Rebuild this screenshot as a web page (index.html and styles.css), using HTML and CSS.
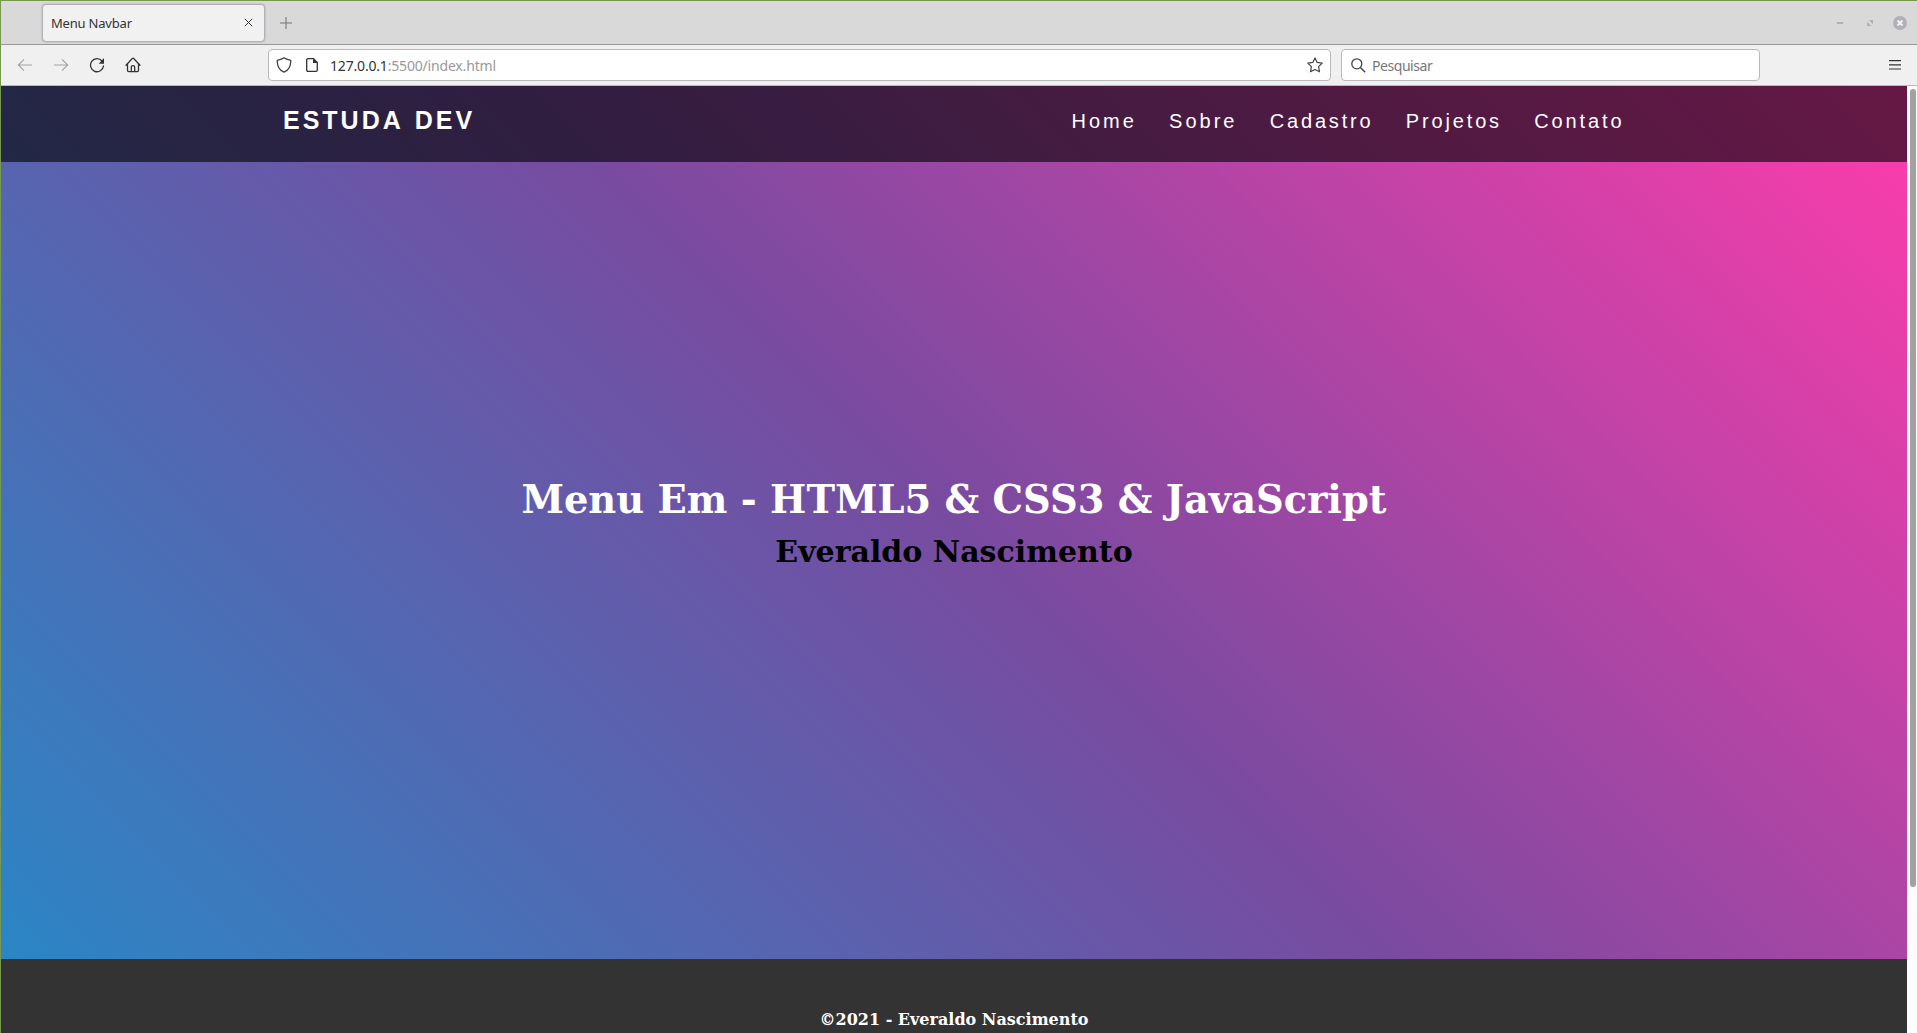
FILE: index.html
```html
<!DOCTYPE html>
<html lang="pt-BR">
<head>
<meta charset="UTF-8">
<title>Menu Navbar</title>
<link rel="stylesheet" href="styles.css">
</head>
<body>
<div class="window">
  <div class="tabbar">
    <div class="tab">
      <span class="tab-title">Menu Navbar</span>
      <svg class="tab-close" width="9" height="9" viewBox="0 0 9 9"><path d="M.8.8l7.400 7.400M8.200.8L.8 8.200" stroke="#333" stroke-width="1" fill="none"/></svg>
    </div>
    <svg class="newtab" width="12" height="12" viewBox="0 0 12 12"><path d="M6 0v12M0 6h12" stroke="#777" stroke-width="1.1"/></svg>
    <div class="controls">
      <svg width="6" height="14" viewBox="0 0 6 14"><path d="M0 7h6" stroke="#b0b1b8" stroke-width="2"/></svg>
      <svg width="6" height="14" viewBox="0 0 6 14"><path d="M1.8 4H6v4.2zM0 5.8V10h4.2z" fill="#b0b1b8"/></svg>
      <svg width="14" height="14" viewBox="0 0 14 14"><circle cx="7" cy="7" r="7" fill="#b0b1b8"/><path d="M4.5 4.5l5 5M9.5 4.5l-5 5" stroke="#f2f2f2" stroke-width="2"/></svg>
    </div>
  </div>
  <div class="toolbar">
    <div class="buttons">
      <svg width="16" height="16" viewBox="0 0 16 16"><path d="M15 8H1.5M7 2.3L1.3 8 7 13.7" stroke="#a3a3a3" stroke-width="1.1" fill="none"/></svg>
      <svg width="16" height="16" viewBox="0 0 16 16"><path d="M1 8h13.5M9 2.3L14.7 8 9 13.7" stroke="#a3a3a3" stroke-width="1.1" fill="none"/></svg>
      <svg width="16" height="16" viewBox="0 0 16 16"><path d="M13 4A6.5 6.5 0 1 0 14.5 9" stroke="#333" stroke-width="1.3" fill="none" stroke-linecap="round"/><path d="M15 1v5.2a.5.5 0 0 1-.5.5H9.8z" fill="#333"/></svg>
      <svg class="home" width="16" height="16" viewBox="0 0 16 16"><path d="M1 8.2L7.3 1.5q.7-.6 1.4 0L15 8.2M2.5 7v6.3q0 1.3 1.3 1.3h8.4q1.3 0 1.3-1.3V7M6.3 14.5v-4.2q0-1.7 1.7-1.7t1.7 1.7v4.2" stroke="#333" stroke-width="1.3" fill="none" stroke-linecap="round"/></svg>
    </div>
    <div class="field address">
      <svg width="16" height="16" viewBox="0 0 16 16"><path d="M8 .8C6.200 2.300 4 2.800 1.300 3.300 1 8.700 3 13 8 15.200 13 13 15 8.700 14.700 3.300 12 2.800 9.800 2.300 8 .8z" stroke="#444" stroke-width="1.3" fill="none" stroke-linejoin="round"/></svg>
      <svg class="page-icon" width="12" height="14" viewBox="0 0 12 14"><path d="M2 .7h5.500L11.300 4.500V12q0 1.300-1.300 1.300H2Q.7 13.300.7 12V2Q.7.7 2 .7z" stroke="#333" stroke-width="1.3" fill="none"/><path d="M7 .5V5h4.500z" fill="#333"/></svg>
      <span class="url"><span class="host">127.0.0.1</span><span class="path">:5500/index.html</span></span>
      <svg class="star" width="16" height="16" viewBox="0 0 16 16"><path d="M8 .9l2.200 4.500 5 .7-3.600 3.500.9 5.200L8 12.500l-4.500 2.300.9-5.200L.8 6.100l5-.7z" stroke="#444" stroke-width="1.2" fill="none" stroke-linejoin="round"/></svg>
    </div>
    <div class="field search">
      <svg width="15" height="15" viewBox="0 0 15 15"><circle cx="5.800" cy="5.800" r="5" stroke="#444" stroke-width="1.300" fill="none"/><path d="M9.400 9.400l4.800 4.800" stroke="#444" stroke-width="1.400"/></svg>
      <span class="placeholder">Pesquisar</span>
    </div>
    <svg class="menu" width="12" height="10" viewBox="0 0 12 10"><path d="M0 .6h12M0 4.800h12M0 9h12" stroke="#333" stroke-width="1.200"/></svg>
  </div>
  <div class="viewport">
    <div class="page">
      <div class="banner">
        <header class="navbar">
          <a class="logo">ESTUDA DEV</a>
          <nav class="links"><a>Home</a><a>Sobre</a><a>Cadastro</a><a>Projetos</a><a>Contato</a></nav>
        </header>
        <main class="hero">
          <h1>Menu Em - HTML5 &amp; CSS3 &amp; JavaScript</h1>
          <h2>Everaldo Nascimento</h2>
        </main>
      </div>
      <footer class="footer">©2021 - Everaldo Nascimento</footer>
    </div>
    <div class="scrollbar"><div class="thumb"></div></div>
  </div>
</div>
</body>
</html>
```
FILE: styles.css
```css
* { box-sizing: border-box; margin: 0; padding: 0; }
html, body { height: 100%; overflow: hidden; }
svg { display: block; flex: none; }
.window {
  display: flex; flex-direction: column; height: 1033px;
  border-top: 1px solid #76994f; border-left: 1px solid #76994f;
  font-family: "Noto Sans", sans-serif;
}
.tabbar {
  flex: none; display: flex; align-items: center; height: 44px;
  padding: 0 10px 0 41px; background: #d9d9d9; border-bottom: 1px solid #989898;
}
.tab {
  display: flex; align-items: center; justify-content: space-between;
  width: 223px; height: 38px; padding: 0 11px 0 8px;
  background: #f1f1f1; border: 1px solid #b0b0b6; border-radius: 4px;
  box-shadow: 0 0 2px rgba(0, 0, 0, .25);
}
.tab-title { font-size: 13px; color: #333; letter-spacing: -.2px; }
.newtab { margin-left: 15px; }
.controls { display: flex; align-items: center; gap: 24px; margin-left: auto; }
.controls svg:last-child { margin-left: -4px; }
.toolbar {
  flex: none; display: flex; align-items: center; height: 41px;
  padding-right: 16px; background: #f0f0f0; border-bottom: 1px solid #b9b9b9;
}
.buttons { display: flex; gap: 20px; width: 267px; padding-left: 16px; }
.home { margin-left: -.5px; }
.field {
  display: flex; align-items: center; height: 32px;
  background: #fff; border: 1px solid #b9b9b9; border-radius: 4px;
}
.address { width: 1063px; padding: 0 7px; }
.page-icon { margin-left: 14px; }
.url { margin-left: 12px; font-size: 14px; letter-spacing: -.18px; color: #333; }
.path { color: #999; }
.star { margin-left: auto; }
.search { width: 419px; margin-left: 10px; padding: 0 9px; }
.placeholder { margin-left: 6px; font-size: 14px; letter-spacing: -.45px; color: #777; }
.menu { margin-left: auto; }
.viewport { flex: 1; display: flex; min-height: 0; overflow: hidden; }
.page { flex: 1; display: flex; flex-direction: column; }
.banner {
  flex: none; display: flex; flex-direction: column; height: 873px;
  background: linear-gradient(225deg, #ff3cac 0%, #784ba0 50%, #2b86c5 100%);
}
.navbar {
  flex: none; display: flex; align-items: center; justify-content: space-between;
  height: 76px; padding: 0 282.5px 6px 282px; background: rgba(0, 0, 0, .6);
  font-family: "Liberation Sans", Arial, sans-serif; color: #fff;
}
.logo { padding-bottom: 2px; font-size: 25px; font-weight: bold; letter-spacing: 3px; word-spacing: 2px; }
.links { display: flex; gap: 32.2px; font-size: 20px; letter-spacing: 3px; }
.links a:nth-child(3), .links a:nth-child(4) { letter-spacing: 2.85px; }
.links a:nth-child(5) { letter-spacing: 2.9px; }
.hero {
  flex: 1; display: flex; flex-direction: column; align-items: center;
  padding-top: 315px; font-family: "DejaVu Serif", serif;
}
.hero h1 { font-size: 38.4px; line-height: 46px; color: #fff; }
.hero h2 { margin-top: 11px; font-size: 30px; line-height: 35px; color: #000; }
.footer {
  flex: 1; padding-top: 51px; background: #333; color: #fff; text-align: center;
  font: bold 16px/19px "DejaVu Serif", serif;
}
.scrollbar { flex: none; width: 10px; padding: 3px 1px 0 3px; background: #fcfcfc; }
.thumb { height: 798px; border-radius: 3px; background: #a2a2a2; }
```
